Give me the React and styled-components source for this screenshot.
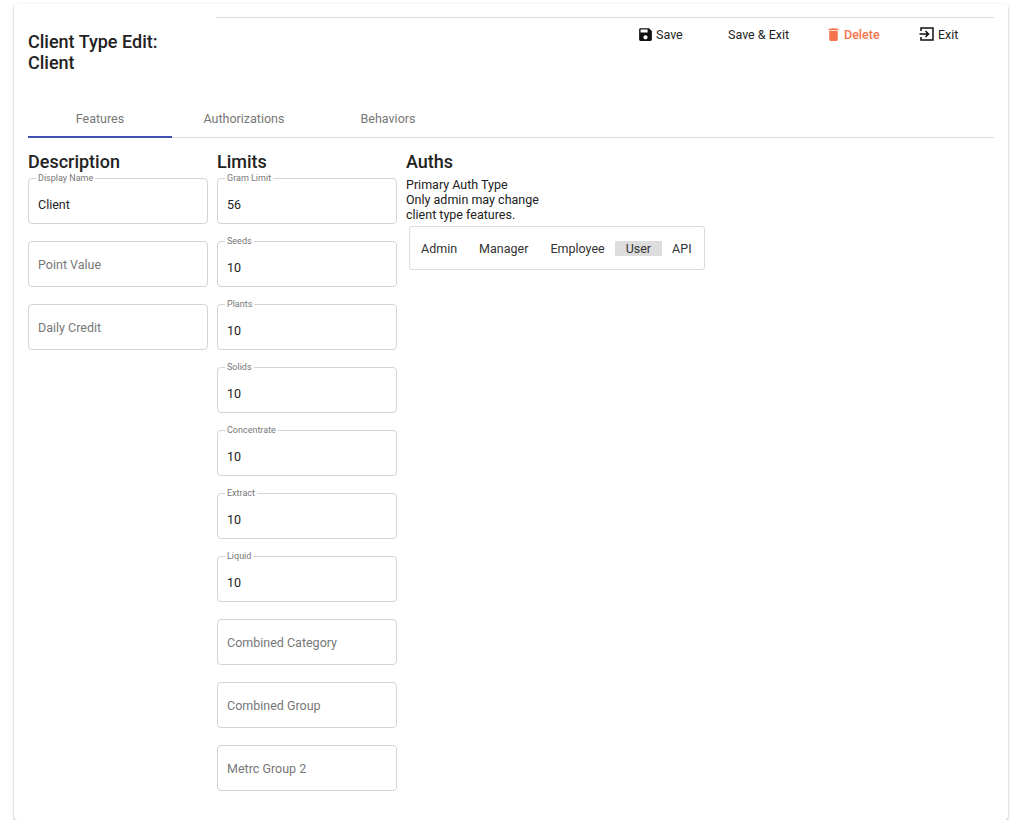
import React from "react";
import styled, { createGlobalStyle } from "styled-components";

const Global = createGlobalStyle`
  body { margin: 0; background: #fff; font-family: Roboto, "Liberation Sans", sans-serif; color: #222; }
`;
const Card = styled.div`
  margin: 4px 13px 0 14px; width: 994px; height: 816px; box-sizing: border-box;
  background: #fff; border-radius: 4px;
  box-shadow: 0 1px 3px rgba(0,0,0,0.25), 0 1px 1px rgba(0,0,0,0.12);
  padding: 13px 14px 0 14px;
`;
const Header = styled.div`display: flex; height: 86px;`;
const Title = styled.h1`
  margin: 14px 0 0 0; width: 188px; font-size: 18px; font-weight: 500; line-height: 21px; color: #222;
`;
const Toolbar = styled.div`
  flex: 1; border-top: 1px solid #ddd; display: flex; padding: 6px 0 0 421px;
`;
const Btn = styled.div`
  display: flex; align-items: center; gap: 2px; height: 20px; font-size: 12.5px; font-weight: 400;
  color: ${p => p.danger ? "#f5734a" : "#222"}; width: ${p => p.w}px;
`;
const Tabs = styled.div`display: flex; border-bottom: 1px solid #ddd; height: 34px;`;
const Tab = styled.div`
  width: 144px; text-align: center; font-size: 12.5px; color: #777; padding-top: 8px; box-sizing: border-box;
  border-bottom: 2px solid ${p => p.active ? "#3f51b5" : "transparent"}; margin-bottom: -1px;
`;
const Body = styled.div`display: flex; gap: 9px; padding-top: 13px;`;
const Col = styled.div`width: ${p => p.w || 180}px; display: flex; flex-direction: column;`;
const H2 = styled.h2`margin: 0 0 5px 0; font-size: 18px; font-weight: 500; line-height: 22px; color: #222;`;
const Field = styled.div`
  margin-bottom: 17px; height: 46px; box-sizing: border-box; border: 1px solid #d4d4d4; border-radius: 4px;
  padding: 0 9px; display: flex; align-items: center; position: relative;
`;
const Legend = styled.span`
  position: absolute; top: -6px; left: 7px; font-size: 9px; color: #777; padding: 0 2px;
  background: #fff; line-height: 10px;
`;
const Value = styled.span`font-size: 12.5px; color: ${p => p.ph ? "#777" : "#222"}; margin-top: ${p => p.ph ? 0 : 6}px;`;
const Note = styled.div`font-size: 12.5px; line-height: 15px; color: #222; margin-top: -1px;`;
const Seg = styled.div`
  margin: 4px 0 0 3px; width: 296px; height: 44px; box-sizing: border-box; border: 1px solid #ddd; border-radius: 3px;
  display: flex; align-items: center; padding-left: 5px; font-size: 12.5px;
`;
const SegItem = styled.span`
  padding: 0 ${p => p.px || 6}px; margin-right: ${p => p.mr}px;
  background: ${p => p.sel ? "#ddd" : "transparent"}; color: #333; line-height: 15px;
`;

const F = ({ label, value }) => (
  <Field>
    <Legend>{label}</Legend>
    <Value>{value}</Value>
  </Field>
);
const P = ({ text }) => <Field><Value ph>{text}</Value></Field>;

export default function App() {
  return (
    <>
      <Global />
      <Card>
        <Header>
          <Title>Client Type Edit:<br />Client</Title>
          <Toolbar>
            <Btn w={91}>
              <svg width="17" height="17" viewBox="0 0 24 24"><path fill="#111" d="M17 3H5a2 2 0 0 0-2 2v14a2 2 0 0 0 2 2h14a2 2 0 0 0 2-2V7l-4-4zm-5 16a3 3 0 1 1 0-6 3 3 0 0 1 0 6zm3-10H5V5h10v4z"/></svg>
              Save
            </Btn>
            <Btn w={97}>Save &amp; Exit</Btn>
            <Btn w={93} danger>
              <svg width="17" height="19" viewBox="0 0 24 24"><path fill="#f5734a" d="M6 19a2 2 0 0 0 2 2h8a2 2 0 0 0 2-2V7H6v12zM19 4h-3.5l-1-1h-5l-1 1H5v2h14V4z"/></svg>
              <b style={{ fontWeight: 500 }}>Delete</b>
            </Btn>
            <Btn w={60}>
              <svg width="18" height="18" viewBox="0 0 24 24"><path fill="none" stroke="#111" strokeWidth="2" d="M4 8V4h16v16H4v-4M2 12h11M10 8l4 4-4 4"/></svg>
              Exit
            </Btn>
          </Toolbar>
        </Header>
        <Tabs>
          <Tab active>Features</Tab>
          <Tab>Authorizations</Tab>
          <Tab>Behaviors</Tab>
        </Tabs>
        <Body>
          <Col>
            <H2>Description</H2>
            <F label="Display Name" value="Client" />
            <P text="Point Value" />
            <P text="Daily Credit" />
          </Col>
          <Col>
            <H2>Limits</H2>
            <F label="Gram Limit" value="56" />
            <F label="Seeds" value="10" />
            <F label="Plants" value="10" />
            <F label="Solids" value="10" />
            <F label="Concentrate" value="10" />
            <F label="Extract" value="10" />
            <F label="Liquid" value="10" />
            <P text="Combined Category" />
            <P text="Combined Group" />
            <P text="Metrc Group 2" />
          </Col>
          <Col w={320}>
            <H2>Auths</H2>
            <Note>Primary Auth Type<br />Only admin may change<br />client type features.</Note>
            <Seg>
              <SegItem mr={10}>Admin</SegItem>
              <SegItem mr={10}>Manager</SegItem>
              <SegItem mr={4}>Employee</SegItem>
              <SegItem sel mr={4} px={11}>User</SegItem>
              <SegItem mr={0}>API</SegItem>
            </Seg>
          </Col>
        </Body>
      </Card>
    </>
  );
}
